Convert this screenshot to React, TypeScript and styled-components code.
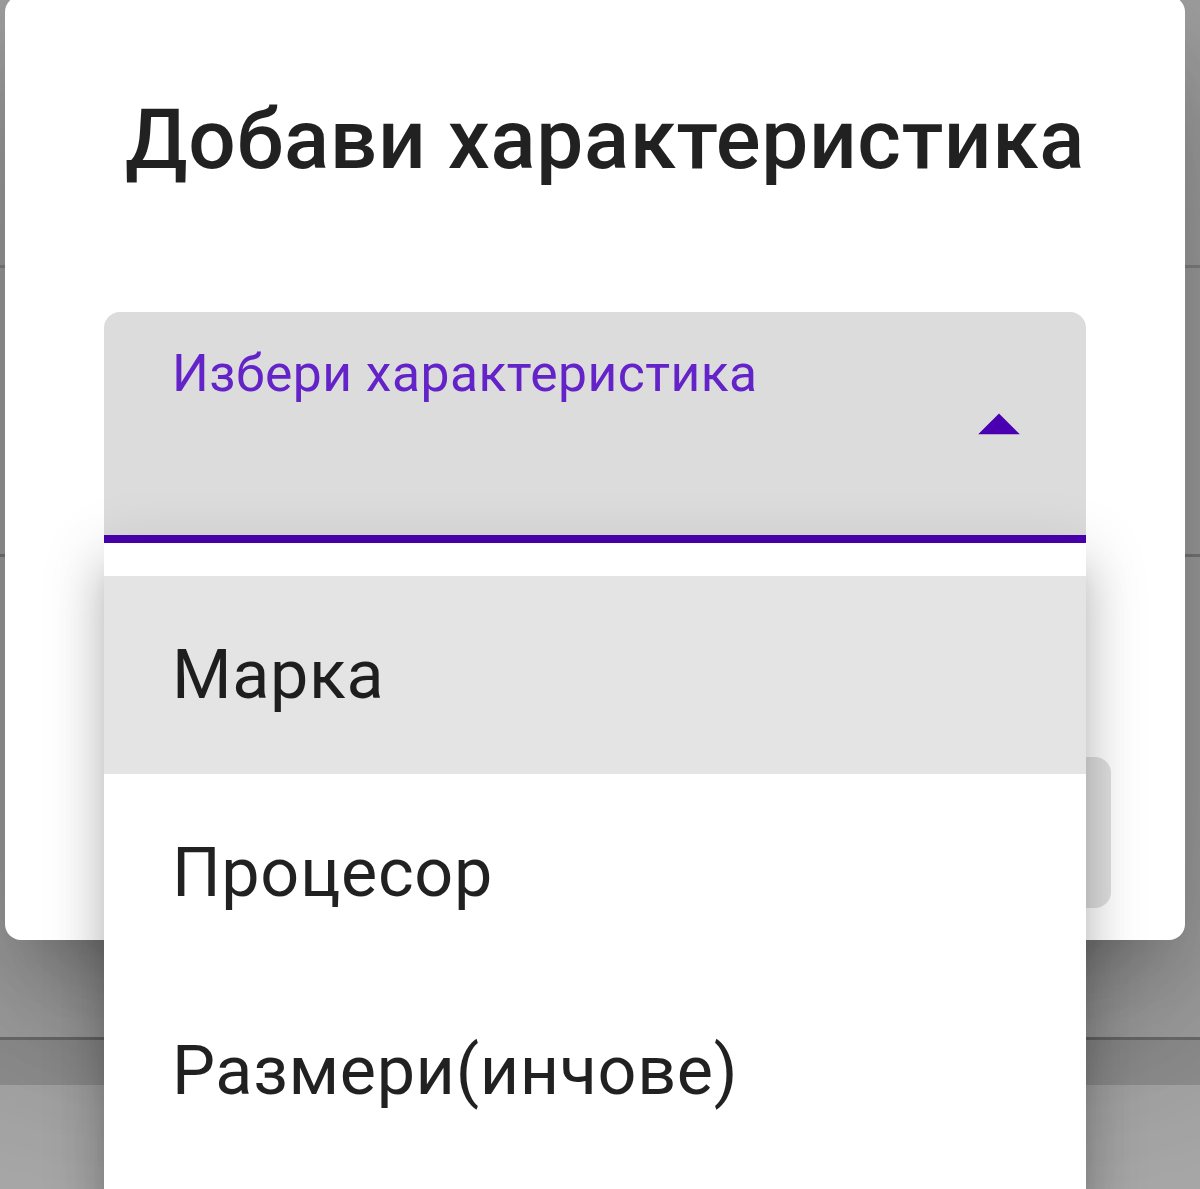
import styled, { createGlobalStyle } from "styled-components";

const GlobalStyle = createGlobalStyle`
  html, body {
    margin: 0;
    padding: 0;
    background: #a3a3a3;
  }
  * {
    box-sizing: border-box;
  }
`;

const options = ["Марка", "Процесор", "Размери(инчове)"];

const App = () => {
  return (
    <>
      <GlobalStyle />
      <Screen>
        <PageBehind>
          <Band height={268} line="#858585" />
          <Band height={289} line="#7a7a7a" />
          <Band height={483} line="#6c6c6c" />
          <Band height={45} tone="#8f8f8f" />
          <Band height={104} tone="#a6a6a6" />
        </PageBehind>

        <Dialog>
          <Title>Добави характеристика</Title>
          <SelectField>
            <FieldLabel>Избери характеристика</FieldLabel>
            <ArrowIcon viewBox="0 0 24 24">
              <path d="M7 14l5-5 5 5z" />
            </ArrowIcon>
          </SelectField>
          <Actions>
            <DisabledButton disabled>Добави</DisabledButton>
          </Actions>
        </Dialog>

        <Menu>
          {options.map((option, i) => (
            <MenuItem key={option} selected={i === 0}>
              {option}
            </MenuItem>
          ))}
        </Menu>
      </Screen>
    </>
  );
};

export default App;

const Screen = styled.div`
  position: relative;
  width: 1200px;
  height: 1189px;
  overflow: hidden;
  font-family: Roboto, "Noto Sans", sans-serif;
`;

const PageBehind = styled.div`
  display: flex;
  flex-direction: column;
  height: 100%;
`;

const Band = styled.div<{ height: number; line?: string; tone?: string }>`
  flex: 0 0 ${(p) => p.height}px;
  background: ${(p) => p.tone || "#a1a1a1"};
  border-bottom: ${(p) => (p.line ? `3px solid ${p.line}` : "none")};
`;

const Dialog = styled.div`
  position: absolute;
  left: 5px;
  top: -4px;
  width: 1180px;
  height: 944px;
  display: flex;
  flex-direction: column;
  padding: 77px 99px 32px;
  background: #ffffff;
  border-radius: 16px;
  box-shadow: 0px 44px 60px -28px rgba(0, 0, 0, 0.2),
    0px 96px 152px 12px rgba(0, 0, 0, 0.14),
    0px 36px 184px 32px rgba(0, 0, 0, 0.12);
`;

const Title = styled.h2`
  margin: 0;
  padding-left: 21px;
  font-size: 83.7px;
  font-weight: 500;
  line-height: 133px;
  letter-spacing: 0.0075em;
  color: rgba(0, 0, 0, 0.87);
  white-space: nowrap;
`;

const SelectField = styled.div`
  position: relative;
  margin-top: 106px;
  height: 231px;
  padding: 36px 68px 0;
  background: #dcdcdc;
  border-radius: 16px 16px 0 0;
  border-bottom: 8px solid #4a00b0;
`;

const FieldLabel = styled.div`
  font-size: 51.6px;
  font-weight: 400;
  line-height: 1;
  letter-spacing: 0.00938em;
  color: #6423c9;
  white-space: nowrap;
`;

const ArrowIcon = styled.svg`
  position: absolute;
  right: 37px;
  top: 64px;
  width: 100px;
  height: 100px;
  fill: #4a00b0;
`;

const Actions = styled.div`
  display: flex;
  justify-content: flex-end;
  margin-top: auto;
  margin-right: -25px;
`;

const DisabledButton = styled.button`
  width: 420px;
  height: 151px;
  border: none;
  border-radius: 16px;
  background: #e0e0e0;
  color: rgba(0, 0, 0, 0.26);
  font-family: Roboto, sans-serif;
  font-size: 58px;
  font-weight: 500;
`;

const Menu = styled.ul`
  position: absolute;
  left: 104px;
  top: 543px;
  width: 982px;
  margin: 0;
  padding: 33px 0;
  list-style: none;
  background: #ffffff;
  box-shadow: 0px 20px 20px -12px rgba(0, 0, 0, 0.2),
    0px 33px 41px 4px rgba(0, 0, 0, 0.14),
    0px 12px 57px 8px rgba(0, 0, 0, 0.12);
`;

const MenuItem = styled.li<{ selected?: boolean }>`
  display: flex;
  align-items: center;
  height: 198px;
  padding: 0 68px;
  background: ${(p) => (p.selected ? "#e4e4e4" : "transparent")};
  font-size: 68.3px;
  font-weight: 400;
  letter-spacing: 0.00938em;
  color: rgba(0, 0, 0, 0.87);
  white-space: nowrap;
`;
